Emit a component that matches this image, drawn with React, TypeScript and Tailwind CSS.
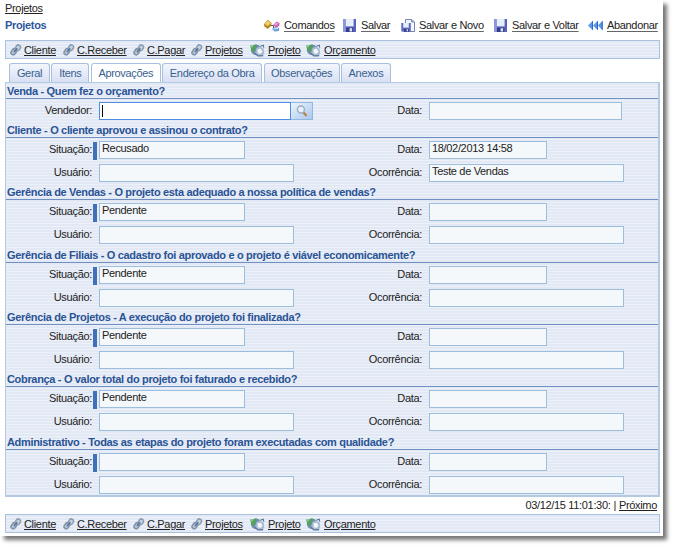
import React from "react";

const stripes =
  "bg-[repeating-linear-gradient(180deg,#e2e9f5_0px,#e2e9f5_2px,#ebf0f9_2px,#ebf0f9_3px)]";

function ChainIcon() {
  return (
    <svg width="12" height="12" viewBox="0 0 12 12" fill="none">
      <rect x=".6" y="5.6" width="6.4" height="4.4" rx="2.2" transform="rotate(-55 3.8 7.8)" fill="#b4c2d2" stroke="#7f93ab" strokeWidth="1.5" />
      <rect x="5" y="1.6" width="5.8" height="4.4" rx="2.2" transform="rotate(-55 7.9 3.8)" fill="#c8d4e1" stroke="#8b9db4" strokeWidth="1.5" />
      <path d="M4 8L7.3 4.2" stroke="#56708e" strokeWidth="1.4" />
    </svg>
  );
}

function GlobeIcon() {
  return (
    <svg width="15" height="13" viewBox="0 0 15 13">
      <circle cx="6.2" cy="5.8" r="5.4" fill="#6f8db8" />
      <path d="M0 1.2L3 1.6L5 .4L7.6 1L5.6 4.2L4.6 7.6L3 8.4L1.2 5.5Z" fill="#55a05c" />
      <path d="M0 1.2L3 1.6L2.2 3.8Z" fill="#a9cfae" />
      <path d="M6.5 4L9.5 2.6L13.6 4.6L14.3 9.5L11.5 12.5L7 11.8L5.2 8.5Z" fill="#a9bad0" />
      <path d="M7.4 5.4L10.6 4.4L12.5 7.4L11 9.8L8 9.4Z" fill="#f2f7fc" />
      <path d="M10.4 2.2L13.2 1.2L13.8 3.6M5 9.4L8 12L13.2 11.6" fill="none" stroke="#536f96" strokeWidth="1.1" />
    </svg>
  );
}

function CommandIcon() {
  return (
    <svg width="16" height="13" viewBox="0 0 16 13">
      <path d="M0 5L4 .8L7.6 4L7 7L3.8 10L.3 7.6Z" fill="#b98a22" />
      <path d="M.6 4.8L4 1.4L7 4.2L3.5 7Z" fill="#efd068" />
      <path d="M7 6.5H9.5V10" fill="none" stroke="#555" />
      <path d="M9 6L12.8 2.6L15.6 4.2L15.2 7L12 8.6Z" fill="#cc5ba8" />
      <path d="M10 5.8L12.8 3.4L14.6 4.4L12 6.6Z" fill="#efa6d8" />
      <path d="M8 10L11 8L15.2 9L15 12L10.5 12.6Z" fill="#6e9bdc" />
      <path d="M9.5 10L14 9.4" stroke="#dcebff" />
    </svg>
  );
}

function SaveIcon() {
  return (
    <svg width="13" height="13" viewBox="0 0 13 13">
      <path d="M0 0H13V13H1L0 12Z" fill="#5863bb" />
      <path d="M0 0H2.8V13H1L0 12Z" fill="#8c95de" />
      <rect x="2.8" y="0" width="7.8" height="7.4" fill="#e6eefa" />
      <rect x="3" y="8.7" width="7.2" height="4.3" fill="#353e88" />
      <rect x="6.6" y="9.2" width="2.5" height="3.3" fill="#dce5f7" />
    </svg>
  );
}

function SaveNewIcon() {
  return (
    <svg width="15" height="13" viewBox="0 0 15 13">
      <path d="M4.5 .5H10.5L13.5 3V12.5H4.5Z" fill="#f3f7fc" stroke="#7585b5" />
      <path d="M10.5 .5V3H13.5" fill="#b7c5e2" stroke="#7585b5" />
      <path d="M.3 4H9.8V12.8H1L.3 12Z" fill="#5f6abc" />
      <rect x="2.2" y="4" width="5.6" height="4.6" fill="#e6eefa" />
      <rect x="3" y="10" width="4.8" height="2.8" fill="#353e88" />
      <rect x="5.6" y="10.3" width="1.4" height="2" fill="#dce5f7" />
    </svg>
  );
}

function BackIcon() {
  return (
    <svg width="15" height="11" viewBox="0 0 15 11">
      <path d="M5 .5L0 5.5L5 10.5ZM10 .5L5 5.5L10 10.5ZM14.7 .5L10 5.5L14.7 10.5Z" fill="#5a97e6" />
      <path d="M4.5 1.5V9.5M9.5 1.5V9.5M14.2 1.5V9.5" stroke="#2c66c4" />
    </svg>
  );
}

function SearchIcon() {
  return (
    <svg width="12" height="12" viewBox="0 0 12 12">
      <path d="M7 7L10 10.2" stroke="#bd8648" strokeWidth="2.4" strokeLinecap="round" />
      <circle cx="4.9" cy="4.5" r="3.5" fill="#e5f1fc" stroke="#9cacbd" strokeWidth="1.3" />
    </svg>
  );
}

const links = [
  { label: "Cliente", icon: "chain", width: "w-[53px]" },
  { label: "C.Receber", icon: "chain", width: "w-[70px]" },
  { label: "C.Pagar", icon: "chain", width: "w-[58px]" },
  { label: "Projetos", icon: "chain", width: "w-[59px]" },
  { label: "Projeto", icon: "globe", width: "w-[56px]" },
  { label: "Orçamento", icon: "globe", width: "w-[75px]" },
];

function LinkBar() {
  return (
    <nav className={`flex h-[19px] items-center border border-[#aac2df] pt-px pl-1 ${stripes}`}>
      {links.map(({ label, icon, width }) => (
        <a key={label} className={`flex shrink-0 items-center whitespace-nowrap ${width}`}>
          <span className={icon === "chain" ? "w-[14px]" : "w-[18px]"}>
            {icon === "chain" ? <ChainIcon /> : <GlobeIcon />}
          </span>
          <span className="leading-[16px] underline underline-offset-1">{label}</span>
        </a>
      ))}
    </nav>
  );
}

const actions = [
  { label: "Comandos", Icon: CommandIcon, cell: "w-[79px]", icon: "w-[20px]" },
  { label: "Salvar", Icon: SaveIcon, cell: "w-[58px]", icon: "w-[18px]" },
  { label: "Salvar e Novo", Icon: SaveNewIcon, cell: "w-[93px]", icon: "w-[18px]" },
  { label: "Salvar e Voltar", Icon: SaveIcon, cell: "w-[94px]", icon: "w-[18px]" },
  { label: "Abandonar", Icon: BackIcon, cell: "w-[70px]", icon: "w-[19px]" },
];

const tabs = [
  { label: "Geral", width: "w-[41px]" },
  { label: "Itens", width: "w-[38px]" },
  { label: "Aprovações", width: "w-[70px]" },
  { label: "Endereço da Obra", width: "w-[100px]" },
  { label: "Observações", width: "w-[76px]" },
  { label: "Anexos", width: "w-[50px]" },
];

const fieldBox = "h-[18px] shrink-0 border border-[#9dbddd] bg-[#f4f8fb] pl-0.5 leading-[13px]";
const labelText = "text-right leading-[17px]";

function Heading({ children }: { children: React.ReactNode }) {
  return (
    <h2 className="h-4 border-b border-[#6f8fc0] pl-px font-bold leading-[16px] tracking-[-0.33px] whitespace-nowrap text-[#2a5394]">
      {children}
    </h2>
  );
}

function Section({ title, status, date, note }: { title: string; status?: string; date?: string; note?: string }) {
  return (
    <section className="h-[62.35px]">
      <Heading>{title}</Heading>
      <div className="mt-[3px] flex h-[18px]">
        <span className={`w-[86px] ${labelText}`}>Situação:</span>
        <span className="mt-px mr-0.5 ml-px h-[18px] w-1 bg-[#3f70b8]" />
        <span className={`${fieldBox} w-[146px]`}>{status}</span>
        <span className={`w-[177px] ${labelText}`}>Data:</span>
        <span className={`${fieldBox} ml-[7px] w-[118px]`}>{date}</span>
      </div>
      <div className="mt-[5px] flex h-[18px]">
        <span className={`w-[86px] ${labelText}`}>Usuário:</span>
        <span className={`${fieldBox} ml-[7px] w-[195px]`} />
        <span className={`w-[128px] ${labelText}`}>Ocorrência:</span>
        <span className={`${fieldBox} ml-[7px] w-[195px]`}>{note}</span>
      </div>
    </section>
  );
}

const sections = [
  { title: "Cliente - O cliente aprovou e assinou o contrato?", status: "Recusado", date: "18/02/2013 14:58", note: "Teste de Vendas" },
  { title: "Gerência de Vendas - O projeto esta adequado a nossa política de vendas?", status: "Pendente" },
  { title: "Gerência de Filiais - O cadastro foi aprovado e o projeto é viável economicamente?", status: "Pendente" },
  { title: "Gerência de Projetos - A execução do projeto foi finalizada?", status: "Pendente" },
  { title: "Cobrança - O valor total do projeto foi faturado e recebido?", status: "Pendente" },
  { title: "Administrativo - Todas as etapas do projeto foram executadas com qualidade?" },
];

export default function App() {
  return (
    <div className="h-[547px] w-[674px] overflow-hidden bg-white font-['Liberation_Sans',Arial,sans-serif] text-[11px] tracking-[-0.33px] text-[#222]">
      <main className="h-[536px] w-[663px] bg-white pr-[3px] pl-[5px] shadow-[4px_4px_4px_0px_#777]">
        <div className="h-[17px] pt-0.5 leading-[13px]">
          <a className="underline underline-offset-1">Projetos</a>
        </div>
        <header className="flex h-[23px] items-start">
          <h1 className="w-[259px] leading-[16px] font-bold text-[#2d579c]">Projetos</h1>
          {actions.map(({ label, Icon, cell, icon }) => (
            <a key={label} className={`flex h-[16px] shrink-0 items-center whitespace-nowrap ${cell}`}>
              <span className={`shrink-0 ${icon}`}><Icon /></span>
              <span className="leading-[14px] underline decoration-[#666] underline-offset-2">{label}</span>
            </a>
          ))}
        </header>
        <LinkBar />
        <div className="mt-1 flex h-[19px] gap-[1.4px] pl-1">
          {tabs.map(({ label, width }) => (
            <div
              key={label}
              className={`flex shrink-0 items-center justify-center rounded-t-[3px] border border-b-0 border-[#a9c0dc] whitespace-nowrap text-[#38618f] ${width} ${label === "Aprovações" ? "bg-white" : "bg-linear-to-b from-[#f2f6fc] to-[#d9e0f4]"}`}
            >
              {label}
            </div>
          ))}
        </div>
        <div className={`h-[415px] border border-r-2 border-b-2 border-[#b3cae2] ${stripes}`}>
          <section className="h-[39px]">
            <Heading>Venda - Quem fez o orçamento?</Heading>
            <div className="mt-[3px] flex h-[18px]">
              <span className={`w-[86px] ${labelText}`}>Vendedor:</span>
              <span className="ml-[7px] h-[18px] w-[192px] border border-[#4c8fe0] bg-white pt-0.5 pl-0.5">
                <span className="block h-3 w-px bg-black" />
              </span>
              <span className="flex h-[18px] w-[22px] items-center justify-center border border-l-0 border-[#91b8df] bg-linear-to-br from-[#edf4fd] to-[#aac8ee]">
                <SearchIcon />
              </span>
              <span className={`w-[109px] ${labelText}`}>Data:</span>
              <span className={`${fieldBox} ml-[7px] w-[193px]`} />
            </div>
          </section>
          {sections.map((section) => <Section key={section.title} {...section} />)}
        </div>
        <div className="flex h-[17px] items-center justify-end gap-[3px] pr-[3px]">
          <span>03/12/15 11:01:30:</span>
          <span>|</span>
          <a className="underline underline-offset-1">Próximo</a>
        </div>
        <LinkBar />
      </main>
    </div>
  );
}
